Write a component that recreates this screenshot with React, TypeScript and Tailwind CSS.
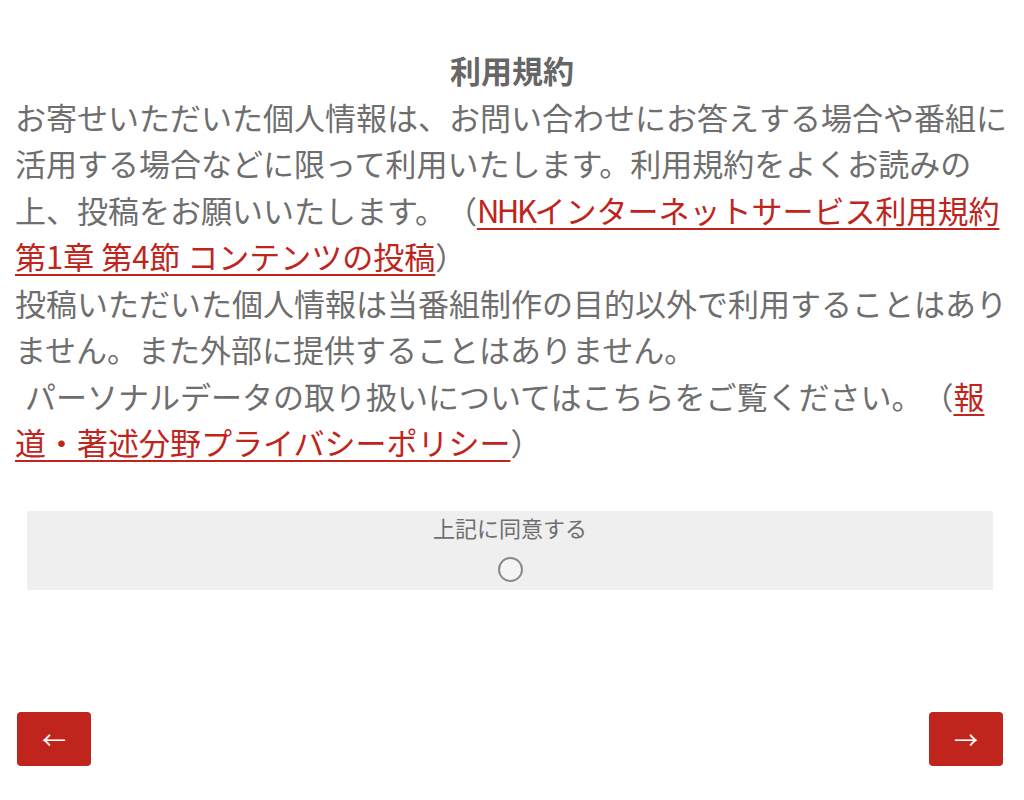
import React from "react";

export default function App() {
  const font = { fontFamily: '"Noto Sans CJK JP", "Noto Sans", sans-serif' };
  return (
    <div className="min-h-[800px] w-[1024px] bg-white text-[#6e6e6e] [text-spacing-trim:space-all]" style={font}>
      <div className="px-[15px] pt-[47px]">
        <h1 className="text-center text-[31px] font-bold leading-[1.5] text-[#666666]">利用規約</h1>
        <p className="text-[31px] leading-[1.5] [text-spacing-trim:space-all]">
          お寄せいただいた個人情報は、お問い合わせにお答えする場合や番組に活用する場合などに限って利用いたします。利用規約をよくお読みの上、投稿をお願いいたします。（
          <a href="#" className="text-[#c0251d] underline underline-offset-[5px] decoration-[1.5px]">
            <span className="tracking-[-2.5px]">NHK</span>インターネットサービス利用規約第1章 第4節 コンテンツの投稿
          </a>
          ）
          <br />
          投稿いただいた個人情報は当番組制作の目的以外で利用することはありません。また外部に提供することはありません。
          <br />
          <span className="inline-block w-[10px]"></span>パーソナルデータの取り扱いについてはこちらをご覧ください。（
          <a href="#" className="text-[#c0251d] underline underline-offset-[5px] decoration-[1.5px]">
            報道・著述分野プライバシーポリシー
          </a>
          ）
        </p>
      </div>
      <div className="ml-[27px] mr-[31px] mt-[45px] flex h-[79px] flex-col items-center bg-[#efefef]">
        <div className="text-[22px] leading-[33px] text-[#6e6e6e]">上記に同意する</div>
        <div className="mt-[13px] h-[25px] w-[25px] rounded-full border-2 border-[#8a8a8a] bg-[#f4f4f4]"></div>
      </div>
      <div className="mt-[122px] flex justify-between pl-[17px] pr-[21px]">
        <button className="flex h-[54px] w-[74px] items-center justify-center rounded-[4px] bg-[#c0251d] text-[24px] text-white">
          ←
        </button>
        <button className="flex h-[54px] w-[74px] items-center justify-center rounded-[4px] bg-[#c0251d] text-[24px] text-white">
          →
        </button>
      </div>
    </div>
  );
}
